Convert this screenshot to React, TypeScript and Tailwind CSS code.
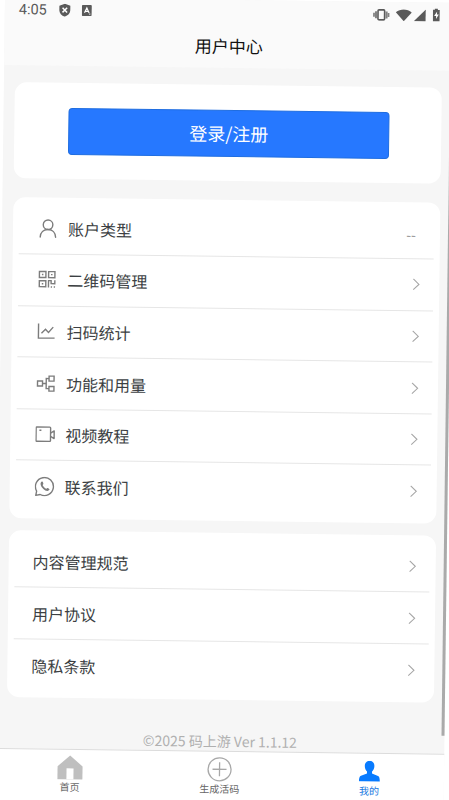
import clsx from 'clsx';

const stroke = {
  fill: 'none',
  stroke: 'currentColor',
  strokeWidth: 1.4,
};

function UserIcon() {
  return (
    <svg className="w-5 h-5" viewBox="0 0 20 20" {...stroke} strokeLinecap="round">
      <circle cx="10" cy="6.2" r="4.8" />
      <path d="M2.3 18.6c.2-4.5 3.3-7.6 7.7-7.6s7.5 3.1 7.7 7.6" />
    </svg>
  );
}

function QrIcon() {
  return (
    <svg className="w-5 h-5" viewBox="0 0 20 20" {...stroke}>
      <path d="M2 2h6.5v6H2zM11.2 2h6.3v6h-6.3zM2 11.2h6.5v6H2z" />
      <path d="M4.5 5h1.5M13.6 5h1.5M4.5 14.2h1.5M11.2 18v-7h2.6v3h3.7v-3.4M13.5 17.4h1.3M16.5 17.4h1.3" />
    </svg>
  );
}

function ChartIcon() {
  return (
    <svg className="w-5 h-5" viewBox="0 0 20 20" {...stroke}>
      <path d="M1.8 2v14.5h16.2" />
      <path d="M4.8 11.8l4-4 3 3 4.7-5.3" />
    </svg>
  );
}

function NodesIcon() {
  return (
    <svg className="w-5 h-5" viewBox="0 0 20 20" {...stroke}>
      <path d="M1.5 7.5h5v5h-5zM13 2.5h5v5h-5zM13 12.8h5v4.7h-5zM6.5 10h3.7M13 5h-2.800v10h2.800" />
    </svg>
  );
}

function VideoIcon() {
  return (
    <svg className="w-5 h-5" viewBox="0 0 20 20" {...stroke} strokeLinejoin="round">
      <rect x="0.7" y="2.5" width="14.5" height="14.3" rx="0.8" />
      <path d="M15.2 8.5l3.6-2.2v7.6l-3.6-2.2M4 5.8h2" />
    </svg>
  );
}

function ContactIcon() {
  return (
    <svg className="w-5 h-5" viewBox="0 0 20 20" {...stroke} strokeLinejoin="round">
      <path d="M2 14.6A9 9 0 1 1 5.6 18L1.2 18.9z" />
      <path
        fill="currentColor"
        stroke="none"
        d="M6.7 5.3c.8-.7 1.3-.4 1.7.8.4 1.2.3 1.5-.5 2.3.9 1.9 2 3 3.9 3.8.8-1 1-1 2.1-.4 1.2.6 1.2.9.5 1.7-1.2 1.6-3.7.9-5.7-1-2.3-2.1-3.9-5.5-2-7.2z"
      />
    </svg>
  );
}

function Chevron() {
  return (
    <svg className="w-2 h-3" viewBox="0 0 8 12" fill="none" stroke="#a6a6a6" strokeWidth="1.1">
      <path d="M1 .6l5.6 5.400L1 11.400" />
    </svg>
  );
}

const accountItems = [
  { label: '账户类型', icon: <UserIcon />, value: '--' },
  { label: '二维码管理', icon: <QrIcon /> },
  { label: '扫码统计', icon: <ChartIcon /> },
  { label: '功能和用量', icon: <NodesIcon /> },
  { label: '视频教程', icon: <VideoIcon /> },
  { label: '联系我们', icon: <ContactIcon /> },
];

const legalItems = [{ label: '内容管理规范' }, { label: '用户协议' }, { label: '隐私条款' }];

type Item = { label: string; icon?: React.ReactNode; value?: string };

function MenuCard({ items, className }: { items: Item[]; className?: string }) {
  return (
    <div className={clsx('mx-[11px] rounded-xl bg-white px-[6px] py-[6px]', className)}>
      {items.map((item, i) => (
        <div
          key={item.label}
          className={clsx(
            'flex h-[51.6px] items-center text-[#3c3f43]',
            item.icon ? 'pl-[19px]' : 'pl-[18px]',
            item.value ? 'pr-[18px]' : 'pr-[13px]',
            i < items.length - 1 && 'border-b border-[#e6e6e6]'
          )}
        >
          {item.icon && <span className="mr-[10px] text-[#7c7c7c]">{item.icon}</span>}
          <span className="flex-1 text-[16px] leading-6">{item.label}</span>
          {item.value ? <span className="pt-[3px] text-sm text-[#888]">{item.value}</span> : <Chevron />}
        </div>
      ))}
    </div>
  );
}

function StatusBar() {
  return (
    <div className="flex h-[25px] items-center px-[14px] text-[#5a5a5a]">
      <span className="w-[40px] font-[Roboto] text-[14.5px] leading-4">4:05</span>
      <svg className="w-3 h-[13px]" viewBox="0 0 12 13">
        <path d="M6 0l5.5 2v4.5c0 3-2.3 5.3-5.5 6.5C2.8 11.8.5 9.5.5 6.5V2z" fill="currentColor" />
        <path d="M3.7 4l4.6 4.6M8.3 4L3.7 8.6" stroke="#fff" strokeWidth="1.5" />
      </svg>
      <svg className="ml-[11px] w-[10px] h-[11px]" viewBox="0 0 10 11">
        <rect width="10" height="11" rx="1" fill="currentColor" />
        <path d="M2.7 7.8L5 2.8l2.3 5M3.5 6.3h3M7.5 9h1" fill="none" stroke="#fff" strokeWidth="1.2" />
      </svg>
      <svg className="ml-auto w-[17px] h-3" viewBox="0 0 17 12" fill="none" stroke="currentColor">
        <rect x="5.2" y="1" width="6.6" height="10" rx="1" strokeWidth="1.6" />
        <path d="M3.2 2.5v7M13.8 2.5v7" strokeWidth="2" strokeOpacity=".75" />
        <path d="M1.2 4v4M15.8 4v4" strokeWidth="1.8" strokeOpacity=".75" />
      </svg>
      <svg className="ml-[6px] w-4 h-3" viewBox="0 0 16 12" fill="currentColor">
        <path d="M8 12L0 3.2C4.5-.7 11.5-.7 16 3.2z" />
      </svg>
      <svg className="ml-[2px] w-3 h-3" viewBox="0 0 12 12" fill="currentColor">
        <path d="M12 0v12H0z" />
      </svg>
      <svg className="ml-[7px] w-[7px] h-[13px]" viewBox="0 0 7 13">
        <path d="M2 0h3v1.3h2V13H0V1.3h2z" fill="currentColor" />
        <path d="M4.3 3L1.3 7.5h2v3l2.7-4.5h-1.9z" fill="#fff" />
      </svg>
    </div>
  );
}

function TabBar() {
  return (
    <nav className="grid h-[62.5px] grid-cols-3 border-t border-[#dcdcdc] bg-white text-[10px] leading-3 text-[#666]">
      <div className="flex flex-col items-center pt-[5px]">
        <svg className="w-[26px] h-[25px]" viewBox="0 0 26 25">
          <path d="M13 .5l12.5 11V24.5H.5V11.5z" fill="#bfbfbf" />
          <path d="M9.5 13.5h7v11h-7z" fill="#fff" />
        </svg>
        <span className="mt-[1px]">首页</span>
      </div>
      <div className="flex flex-col items-center pt-[5px]">
        <svg className="w-[25px] h-[25px]" viewBox="0 0 25 25" fill="none" stroke="#a8a8a8" strokeWidth="1.3">
          <circle cx="12.5" cy="12.5" r="11.5" />
          <path d="M12.5 5.5v14M5.5 12.5h14" />
        </svg>
        <span className="mt-[1px]">生成活码</span>
      </div>
      <div className="flex flex-col items-center pt-[7px] text-[#1677e0]">
        <svg className="w-[21px] h-[21px]" viewBox="0 0 21 21" fill="#087bff">
          <path d="M10.5 0c3 0 4.8 2.2 4.8 5.2 0 2.5-1 4.4-2.3 5.5v2l6 2.5c1.3.6 1.7 1.6 2 5.3H0c.3-3.7.7-4.7 2-5.3l6-2.5v-2C6.7 9.6 5.7 7.7 5.7 5.2 5.7 2.2 7.5 0 10.5 0z" />
        </svg>
        <span className="mt-[3px]">我的</span>
      </div>
    </nav>
  );
}

export default function App() {
  return (
    <div className="h-[800px] w-[449px] overflow-hidden bg-white font-['Noto_Sans_CJK_SC',sans-serif]">
      <div className="relative mt-[-3px] ml-[5.1px] flex h-[812.5px] w-[449px] origin-top-left rotate-[0.74deg] flex-col bg-[#f6f6f6]">
        <header className="h-[69px] bg-[#fafafa]">
          <StatusBar />
          <h1 className="pt-[8.5px] text-center text-[17px] leading-6 text-[#111]">用户中心</h1>
        </header>
        <div className="mx-[11px] mt-[17px] h-[96.5px] rounded-xl bg-white px-[54px] pt-[24.5px]">
          <button className="block h-[47.5px] w-[321px] rounded border border-[#1f6de0] bg-[#2678ff] text-[18px] text-white">
            登录/注册
          </button>
        </div>
        <MenuCard items={accountItems} className="mt-[18.3px]" />
        <MenuCard items={legalItems} className="mt-[11.7px]" />
        <footer className="flex-1 pt-[31px] text-center text-[14px] leading-5 text-[#b0b0b0]">
          ©2025 码上游 Ver 1.1.12
        </footer>
        <TabBar />
        <div className="absolute right-0 top-[105px] h-[628px] w-[3px] bg-linear-to-b from-[#ddd] via-[#aaa] via-20% to-[#aaa]" />
      </div>
    </div>
  );
}
